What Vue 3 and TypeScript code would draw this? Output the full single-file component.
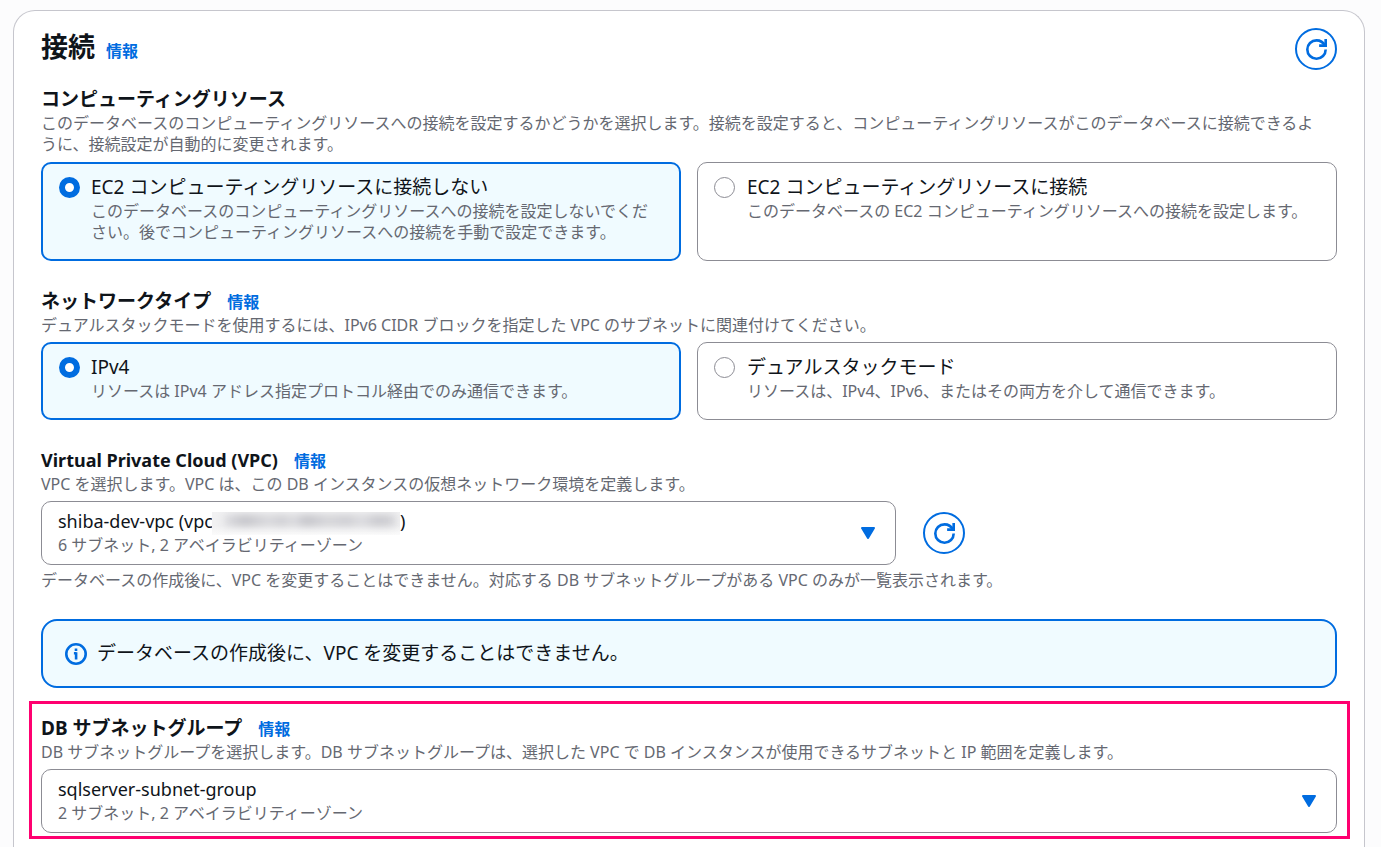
<script setup lang="ts">
import { ref } from 'vue'

interface Tile {
  value: string
  label: string
  description: string
}

const compute = ref('none')
const network = ref('ipv4')
const vpc = ref('shiba-dev-vpc')
const subnetGroup = ref('sqlserver-subnet-group')

const computeTiles: Tile[] = [
  {
    value: 'none',
    label: 'EC2 コンピューティングリソースに接続しない',
    description:
      'このデータベースのコンピューティングリソースへの接続を設定しないでください。後でコンピューティングリソースへの接続を手動で設定できます。',
  },
  {
    value: 'ec2',
    label: 'EC2 コンピューティングリソースに接続',
    description: 'このデータベースの EC2 コンピューティングリソースへの接続を設定します。',
  },
]

const networkTiles: Tile[] = [
  {
    value: 'ipv4',
    label: 'IPv4',
    description: 'リソースは IPv4 アドレス指定プロトコル経由でのみ通信できます。',
  },
  {
    value: 'dual',
    label: 'デュアルスタックモード',
    description: 'リソースは、IPv4、IPv6、またはその両方を介して通信できます。',
  },
]
</script>

<template>
  <main class="page">
    <section class="card">
      <header class="header">
        <h2 class="title">接続 <a class="info" href="#">情報</a></h2>
        <button class="refresh" type="button" aria-label="更新">
          <svg viewBox="0 0 16 16" aria-hidden="true">
            <path d="M15 8c0 3.87-3.13 7-7 7s-7-3.13-7-7 3.13-7 7-7c2.79 0 5.2 1.63 6.33 4" />
            <path d="M10 5h5V0" />
          </svg>
        </button>
      </header>

      <fieldset class="field">
        <legend class="label">コンピューティングリソース</legend>
        <p class="hint wide">
          このデータベースのコンピューティングリソースへの接続を設定するかどうかを選択します。接続を設定すると、コンピューティングリソースがこのデータベースに接続できるように、接続設定が自動的に変更されます。
        </p>
        <div class="tiles">
          <label
            v-for="tile in computeTiles"
            :key="tile.value"
            class="tile"
            :class="{ selected: compute === tile.value }"
          >
            <input v-model="compute" class="radio" type="radio" name="compute" :value="tile.value" />
            <span class="tile-text">
              <span class="option">{{ tile.label }}</span>
              <span class="hint">{{ tile.description }}</span>
            </span>
          </label>
        </div>
      </fieldset>

      <fieldset class="field">
        <legend class="label">ネットワークタイプ <a class="info" href="#">情報</a></legend>
        <p class="hint">
          デュアルスタックモードを使用するには、IPv6 CIDR ブロックを指定した VPC のサブネットに関連付けてください。
        </p>
        <div class="tiles">
          <label
            v-for="tile in networkTiles"
            :key="tile.value"
            class="tile"
            :class="{ selected: network === tile.value }"
          >
            <input v-model="network" class="radio" type="radio" name="network" :value="tile.value" />
            <span class="tile-text">
              <span class="option">{{ tile.label }}</span>
              <span class="hint">{{ tile.description }}</span>
            </span>
          </label>
        </div>
      </fieldset>

      <div class="field">
        <div class="label">
          <label class="latin" for="vpc">Virtual Private Cloud (VPC)</label> <a class="info" href="#">情報</a>
        </div>
        <p class="hint">VPC を選択します。VPC は、この DB インスタンスの仮想ネットワーク環境を定義します。</p>
        <div class="row">
          <div class="picker partial">
            <select id="vpc" v-model="vpc" class="select">
              <option value="shiba-dev-vpc">shiba-dev-vpc</option>
            </select>
            <div class="picked" aria-hidden="true">
              <span class="option latin masked-row">shiba-dev-vpc (vpc<span class="mask"><i></i></span>)</span>
              <span class="hint">6 サブネット, 2 アベイラビリティーゾーン</span>
            </div>
            <svg class="caret" viewBox="0 0 14 12" aria-hidden="true">
              <path d="M1 1h12L7 11z" />
            </svg>
          </div>
          <button class="refresh" type="button" aria-label="VPC を更新">
            <svg viewBox="0 0 16 16" aria-hidden="true">
              <path d="M15 8c0 3.87-3.13 7-7 7s-7-3.13-7-7 3.13-7 7-7c2.79 0 5.2 1.63 6.33 4" />
              <path d="M10 5h5V0" />
            </svg>
          </button>
        </div>
        <p class="hint constraint">
          データベースの作成後に、VPC を変更することはできません。対応する DB サブネットグループがある VPC のみが一覧表示されます。
        </p>
      </div>

      <div class="alert" role="status">
        <svg class="alert-icon" viewBox="0 0 22 22" aria-hidden="true">
          <circle cx="11" cy="11" r="9.7" />
          <path d="M11 5.4v2.6M8.9 10.2h2.3M11.1 9.2v7.2" />
        </svg>
        <span class="option">データベースの作成後に、VPC を変更することはできません。</span>
      </div>

      <div class="field highlighted">
        <div class="label">
          <label for="subnet-group">DB サブネットグループ</label> <a class="info" href="#">情報</a>
        </div>
        <p class="hint">
          DB サブネットグループを選択します。DB サブネットグループは、選択した VPC で DB インスタンスが使用できるサブネットと IP 範囲を定義します。
        </p>
        <div class="picker">
          <select id="subnet-group" v-model="subnetGroup" class="select">
            <option value="sqlserver-subnet-group">sqlserver-subnet-group</option>
          </select>
          <div class="picked" aria-hidden="true">
            <span class="option latin">sqlserver-subnet-group</span>
            <span class="hint">2 サブネット, 2 アベイラビリティーゾーン</span>
          </div>
          <svg class="caret" viewBox="0 0 14 12" aria-hidden="true">
            <path d="M1 1h12L7 11z" />
          </svg>
        </div>
      </div>
    </section>
  </main>
</template>

<style>
body {
  margin: 0;
  background: #fcfcfd;
}
</style>

<style scoped>
.page {
  box-sizing: border-box;
  min-height: 100vh;
  padding: 10px 16px 0 13px;
  display: flex;
  color: #0f141a;
  font-family: 'Noto Sans', 'Noto Sans CJK JP', sans-serif;
  font-size: 19px;
  line-height: 27px;
}
.card {
  box-sizing: border-box;
  flex: 1;
  min-width: 0;
  padding: 17px 27px 0;
  display: flex;
  flex-direction: column;
  gap: 27px;
  background: #fff;
  border: 1px solid #c6c6cd;
  border-bottom: 0;
  border-radius: 22px 22px 0 0;
}
.header {
  display: flex;
  align-items: flex-start;
  justify-content: space-between;
  margin-bottom: -11px;
}
.title {
  margin: 0;
  display: flex;
  align-items: baseline;
  gap: 11px;
  font-size: 27px;
  line-height: 38px;
  font-weight: 700;
}
.info {
  color: #006ce0;
  font-size: 16px;
  line-height: 21px;
  font-weight: 700;
  text-decoration: none;
}
.refresh {
  box-sizing: border-box;
  flex: none;
  width: 42px;
  height: 42px;
  padding: 0;
  display: flex;
  align-items: center;
  justify-content: center;
  background: #fff;
  border: 2px solid #006ce0;
  border-radius: 50%;
  cursor: pointer;
}
.refresh svg {
  width: 21px;
  height: 21px;
  fill: none;
  stroke: #006ce0;
  stroke-width: 2;
}
.field {
  min-width: 0;
  margin: 0;
  padding: 0;
  border: 0;
}
.label {
  padding: 0;
  display: flex;
  align-items: baseline;
  gap: 16px;
  font-weight: 700;
}
.latin {
  font-size: 18px;
}
.hint {
  display: block;
  margin: 0;
  color: #656871;
  font-size: 16px;
  line-height: 21px;
}
.wide {
  padding: 0 12px 1px 0;
}
.option {
  display: block;
}
.tiles {
  margin-top: 6px;
  display: grid;
  grid-template-columns: 1fr 1fr;
  gap: 16px;
}
.tile {
  box-sizing: border-box;
  padding: 11px 16px 17px;
  display: flex;
  gap: 12px;
  border: 1px solid #8c8c94;
  border-radius: 10px;
  cursor: pointer;
}
.tile.selected {
  padding: 10px 16px 16px;
  gap: 11px;
  border: 2px solid #006ce0;
  background: #f0fbff;
}
.radio {
  box-sizing: border-box;
  appearance: none;
  flex: none;
  width: 21px;
  height: 21px;
  margin: 3px 0 0;
  background: #fff;
  border: 1px solid #8c8c94;
  border-radius: 50%;
}
.radio:checked {
  border: 6px solid #006ce0;
}
.tile-text {
  min-width: 0;
}
.row {
  display: flex;
  align-items: center;
  gap: 27px;
}
.picker {
  margin-top: 6px;
  display: grid;
  align-items: center;
}
.picker > * {
  grid-area: 1 / 1;
}
.partial {
  width: 66%;
}
.row .refresh {
  margin-top: 6px;
}
.select {
  appearance: none;
  align-self: stretch;
  width: 100%;
  padding: 0 17px;
  color: transparent;
  font: inherit;
  background: #fff;
  border: 1px solid #8c8c94;
  border-radius: 10px;
}
.picked {
  padding: 7px 48px 9px 17px;
  pointer-events: none;
}
.masked-row {
  display: flex;
}
.mask {
  width: 188px;
  height: 23px;
  margin: 4px 0 0 -1px;
  overflow: hidden;
  background: linear-gradient(#f1f1f2, #f1f1f2 60%, #fbfbfb);
}
.mask i {
  display: block;
  height: 11px;
  margin: 3px 4px 0 12px;
  background: linear-gradient(
    90deg,
    #dcdce0,
    #bebec4 12%,
    #d6d6da 26%,
    #cacacf 34%,
    #dadade 40%,
    #bebec4 48%,
    #d2d2d6 60%,
    #cacacf 72%,
    #dadade 80%,
    #c2c2c8 90%,
    #d2d2d6
  );
  filter: blur(4px);
}
.caret {
  justify-self: end;
  width: 14px;
  height: 12px;
  margin-right: 21px;
  fill: #006ce0;
  stroke: #006ce0;
  stroke-width: 2;
  stroke-linejoin: round;
  pointer-events: none;
}
.constraint {
  margin-top: 5px;
  padding-bottom: 1px;
}
.alert {
  padding: 19px 22px;
  display: flex;
  align-items: center;
  gap: 10px;
  background: #f0fbff;
  border: 2px solid #006ce0;
  border-radius: 16px;
}
.alert-icon {
  flex: none;
  width: 22px;
  height: 22px;
  fill: none;
  stroke: #006ce0;
  stroke-width: 2.6;
}
.highlighted {
  position: relative;
}
.highlighted::after {
  content: '';
  position: absolute;
  inset: -14px -13px -6px -12px;
  border: 3px solid #ff0070;
  pointer-events: none;
}
</style>
